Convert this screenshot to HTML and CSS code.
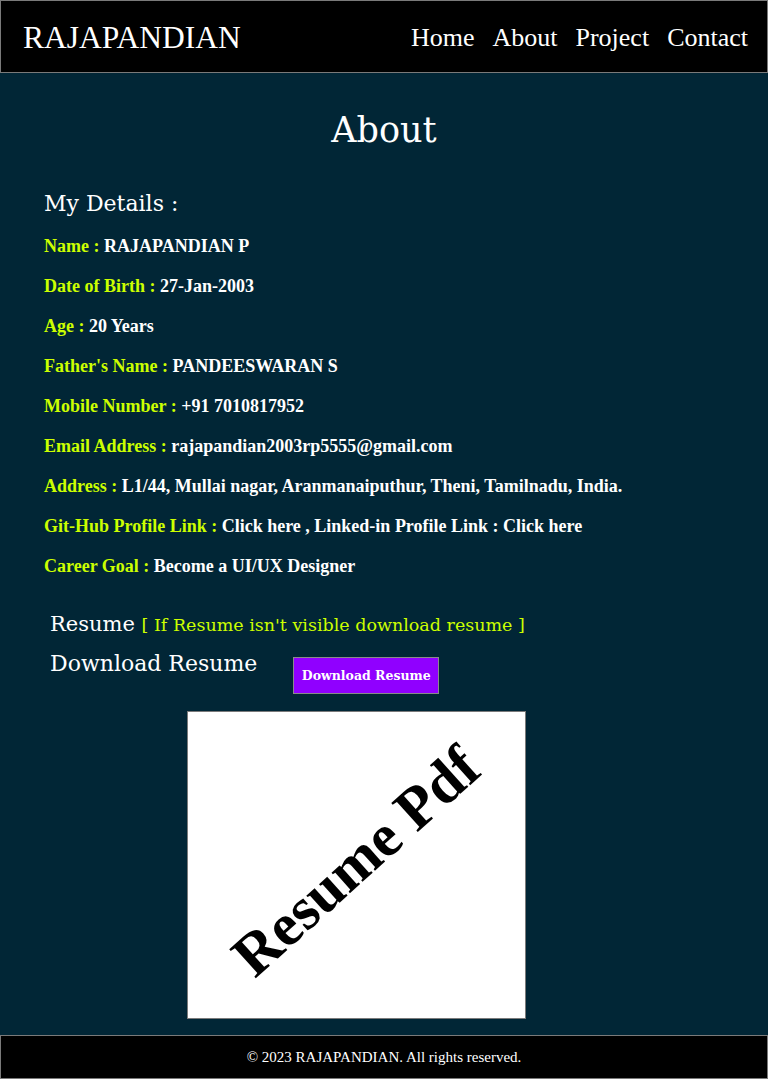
FILE: index.html
```html
<!DOCTYPE html>
<html lang="en">
<head>
<meta charset="utf-8">
<title>About - RAJAPANDIAN</title>
<link rel="stylesheet" href="styles.css">
</head>
<body>
<header class="topbar">
  <div class="logo">RAJAPANDIAN</div>
  <nav class="nav">
    <a href="#">Home</a>
    <a href="#">About</a>
    <a href="#">Project</a>
    <a href="#">Contact</a>
  </nav>
</header>
<main class="main">
  <h1 class="title">About</h1>
  <section class="details">
    <h2 class="sub">My Details :</h2>
    <p class="row"><span class="lbl">Name : </span>RAJAPANDIAN P</p>
    <p class="row"><span class="lbl">Date of Birth : </span>27-Jan-2003</p>
    <p class="row"><span class="lbl">Age : </span>20 Years</p>
    <p class="row"><span class="lbl">Father's Name : </span>PANDEESWARAN S</p>
    <p class="row"><span class="lbl">Mobile Number : </span>+91 7010817952</p>
    <p class="row"><span class="lbl">Email Address : </span>rajapandian2003rp5555@gmail.com</p>
    <p class="row"><span class="lbl">Address : </span>L1/44, Mullai nagar, Aranmanaiputhur, Theni, Tamilnadu, India.</p>
    <p class="row"><span class="lbl">Git-Hub Profile Link : </span><a href="#">Click here</a> , Linked-in Profile Link : <a href="#">Click here</a></p>
    <p class="row"><span class="lbl">Career Goal : </span>Become a UI/UX Designer</p>
  </section>
  <section class="resume">
    <h3 class="rhead">Resume <span class="note">[ If Resume isn't visible download resume ]</span></h3>
    <div class="dl">
      <span class="dltext">Download Resume</span>
      <button class="btn">Download Resume</button>
    </div>
    <div class="pdf">
      <span class="pdftext">Resume Pdf</span>
    </div>
  </section>
</main>
<footer class="foot">© 2023 RAJAPANDIAN. All rights reserved.</footer>
</body>
</html>
```
FILE: styles.css
```css
html, body {
  margin: 0;
  padding: 0;
}
body {
  background: #012636;
  color: #ffffff;
  font-family: "Liberation Serif", serif;
  width: 768px;
  height: 1079px;
  display: flex;
  flex-direction: column;
}
.topbar {
  box-sizing: border-box;
  height: 73px;
  background: #000;
  border: 1px solid #7a7a7a;
  display: flex;
  align-items: center;
  justify-content: space-between;
  padding: 0 19px 0 22px;
}
.logo {
  font-size: 31.5px;
  line-height: 40px;
  padding-top: 2px;
}
.nav {
  display: flex;
  gap: 18px;
  padding-top: 2px;
}
.nav a {
  color: #fff;
  text-decoration: none;
  font-size: 26px;
  line-height: 30px;
}
.main {
  flex: 1;
  display: flex;
  flex-direction: column;
}
.title {
  margin: 33px 0 0;
  text-align: center;
  font-family: "DejaVu Serif", serif;
  font-weight: normal;
  font-size: 35px;
  line-height: 48px;
}
.details {
  padding: 0 0 0 44px;
  margin-top: 30px;
}
.sub {
  margin: 0 0 2px;
  font-family: "DejaVu Serif", serif;
  font-weight: normal;
  font-size: 22px;
  line-height: 40px;
}
.row {
  margin: 0;
  font-weight: bold;
  font-size: 18px;
  line-height: 40px;
}
.row a {
  color: #fff;
  text-decoration: none;
}
.lbl {
  color: #ccff00;
}
.resume {
  padding-left: 50px;
  margin-top: 20px;
}
.rhead {
  margin: 0;
  font-family: "DejaVu Serif", serif;
  font-weight: normal;
  font-size: 21px;
  line-height: 36px;
}
.note {
  color: #ccff00;
  font-size: 17.5px;
}
.dl {
  display: flex;
  align-items: flex-start;
  gap: 36px;
}
.dltext {
  font-family: "DejaVu Serif", serif;
  font-size: 22px;
  line-height: 42px;
}
.btn {
  margin-top: 14px;
  box-sizing: border-box;
  width: 146px;
  height: 37px;
  padding: 0;
  background: #9000ff;
  color: #fff;
  border: 1px solid #8a8a8a;
  font-family: "DejaVu Serif", serif;
  font-weight: bold;
  font-size: 12.5px;
}
.pdf {
  box-sizing: border-box;
  width: 339px;
  height: 308px;
  margin: 17px 0 0 137px;
  background: #fff;
  border: 1px solid #7a7a7a;
  display: flex;
  align-items: center;
  justify-content: center;
}
.pdftext {
  color: #000;
  font-family: "Liberation Serif", serif;
  font-weight: bold;
  font-size: 60px;
  white-space: nowrap;
  transform: translateY(-4px) rotate(-42deg);
}
.foot {
  box-sizing: border-box;
  height: 44px;
  background: #000;
  border: 1px solid #7a7a7a;
  display: flex;
  align-items: center;
  justify-content: center;
  font-size: 15px;
}
```
